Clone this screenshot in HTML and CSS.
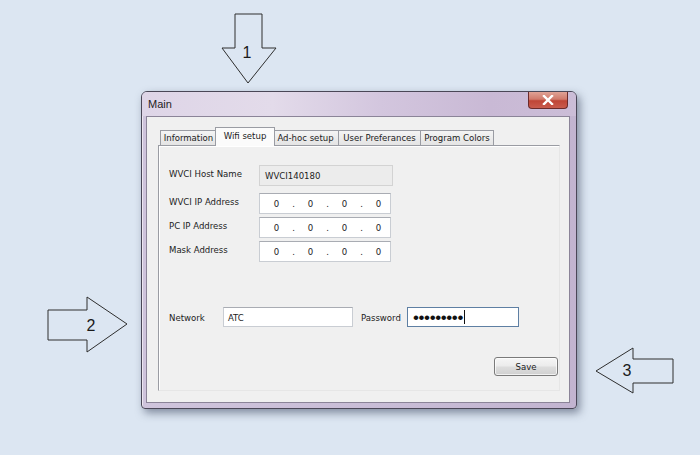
FILE: index.html
```html
<!DOCTYPE html>
<html lang="en">
<head>
    <meta charset="UTF-8">
    <title>Main - Wifi setup</title>
    <link rel="stylesheet" href="styles.css">
</head>
<body>
    <svg class="callouts" viewBox="0 0 700 455" width="700" height="455">
        <polygon points="235,14 262,14 262,48 276,48 248,83 222,48 235,48"/>
        <polygon points="48,310 87,310 87,297 127,324 87,352 87,340 48,340"/>
        <polygon points="596,371 633,348 633,359 673,359 673,383 633,383 633,393"/>
        <text x="247" y="58">1</text>
        <text x="91" y="331">2</text>
        <text x="627" y="376">3</text>
    </svg>

    <div class="window">
        <div class="titlebar">
            <span class="title">Main</span>
            <button class="close" title="Close">
                <svg width="12" height="10" viewBox="0 0 12 10">
                    <path d="M2 1 L10 9 M10 1 L2 9" stroke="#fff" stroke-width="2.4" stroke-linecap="square"/>
                </svg>
            </button>
        </div>

        <div class="client">
            <div class="tabs">
                <div class="tab w-info">Information</div>
                <div class="tab active w-wifi">Wifi setup</div>
                <div class="tab w-adhoc">Ad-hoc setup</div>
                <div class="tab w-user">User Preferances</div>
                <div class="tab w-colors">Program Colors</div>
            </div>

            <div class="panel">
                <div class="fields">
                    <div class="row host">
                        <label>WVCI Host Name</label>
                        <div class="box readonly">WVCI140180</div>
                    </div>
                    <div class="row">
                        <label>WVCI IP Address</label>
                        <div class="box ip"><span>0</span><span>.</span><span>0</span><span>.</span><span>0</span><span>.</span><span>0</span></div>
                    </div>
                    <div class="row">
                        <label>PC IP Address</label>
                        <div class="box ip"><span>0</span><span>.</span><span>0</span><span>.</span><span>0</span><span>.</span><span>0</span></div>
                    </div>
                    <div class="row">
                        <label>Mask Address</label>
                        <div class="box ip"><span>0</span><span>.</span><span>0</span><span>.</span><span>0</span><span>.</span><span>0</span></div>
                    </div>
                </div>

                <div class="net-row">
                    <label class="net-label">Network</label>
                    <div class="box network">ATC</div>
                    <label class="pass-label">Password</label>
                    <div class="box password focused"><span class="dots">•••••••••</span><span class="caret"></span></div>
                </div>

                <div class="actions">
                    <button class="save">Save</button>
                </div>
            </div>
        </div>
    </div>
</body>
</html>
```

FILE: styles.css
```css
body {
    margin: 0;
    width: 700px;
    height: 455px;
    overflow: hidden;
    background: #dce6f2;
    font-family: "DejaVu Sans Condensed", "Liberation Sans", Arial, sans-serif;
    font-size: 9.5px;
    color: #1c1c1c;
    position: relative;
}
.callouts {
    position: absolute;
    left: 0;
    top: 0;
    pointer-events: none;
}
.callouts polygon {
    fill: #dce6f2;
    stroke: #2e2e2e;
    stroke-width: 1;
}
.callouts text {
    font-family: "Liberation Sans", Arial, sans-serif;
    font-size: 16px;
    fill: #1a1a1a;
    text-anchor: middle;
}

/* window frame */
.window {
    box-sizing: border-box;
    margin: 91px 0 0 141px;
    width: 436px;
    height: 318px;
    border: 1px solid #4a4757;
    border-radius: 6px 6px 4px 4px;
    padding: 0 6px 5px 4px;
    background: linear-gradient(90deg, #cfc4dc, #c8bcd6 60%, #c2b4d0);
    box-shadow: 3px 4px 9px rgba(40, 50, 75, 0.5), inset 1px 1px 0 rgba(255, 255, 255, 0.6);
    display: flex;
    flex-direction: column;
}
.titlebar {
    height: 24px;
    margin: 0 -6px 0 -4px;
    padding: 0 8px 0 6px;
    display: flex;
    justify-content: space-between;
    align-items: flex-start;
    background: linear-gradient(90deg, #ded5e7 0%, #e3dbea 30%, #d3c6de 55%, #c9b9d5 80%, #cbbdd7 100%);
    border-radius: 5px 5px 0 0;
}
.title {
    font-family: "Liberation Sans", Arial, sans-serif;
    font-size: 11px;
    padding-top: 6px;
    color: #1e1e1e;
}
.close {
    width: 40px;
    height: 17px;
    padding: 0;
    border: 1px solid #6b2a2a;
    border-top: none;
    border-radius: 0 0 4px 4px;
    background: linear-gradient(180deg, #e0a396 0%, #d07a6b 45%, #bf4536 55%, #c95b4d 100%);
    display: flex;
    align-items: center;
    justify-content: center;
}

/* client area */
.client {
    flex: 1;
    background: #f0f0f0;
    border: 1px solid #8b8498;
    padding: 10px 9px 11px 11px;
    display: flex;
    flex-direction: column;
}
.tabs {
    display: flex;
    align-items: flex-end;
    height: 18px;
    padding-left: 2px;
    position: relative;
    z-index: 1;
}
.tab {
    box-sizing: border-box;
    height: 15px;
    border: 1px solid #9a9ca3;
    border-bottom: none;
    border-left: none;
    background: linear-gradient(180deg, #f4f4f4, #e4e4e4);
    text-align: center;
    line-height: 14px;
    white-space: nowrap;
}
.tab.w-info { width: 57px; border-left: 1px solid #9a9ca3; }
.tab.w-wifi { width: 60px; }
.tab.w-adhoc { width: 66px; }
.tab.w-user { width: 82px; }
.tab.w-colors { width: 73px; }
.tab.active {
    height: 19px;
    margin: 0 -2px -1px -2px;
    border-left: 1px solid #9a9ca3;
    background: #fbfbfb;
    line-height: 15px;
    position: relative;
    z-index: 2;
}
.panel {
    flex: 1;
    border: 1px solid #9a9ca3;
    border-right-color: #e6e6e6;
    border-bottom-color: #e6e6e6;
    background: #f0f0f0;
    box-shadow: inset 1px 1px 0 #ffffff;
    padding: 19px 1px 0 10px;
}

/* rows */
.row {
    display: flex;
    align-items: flex-start;
    height: 21px;
    margin-bottom: 3px;
}
.row.host {
    margin-bottom: 7px;
}
.row label {
    width: 90px;
    padding-top: 3px;
    line-height: 12px;
}
.box {
    box-sizing: border-box;
    height: 21px;
    border: 1px solid #c9cdd3;
    border-top-color: #a9acb3;
    background: #ffffff;
    display: flex;
    align-items: center;
}
.box.readonly {
    width: 134px;
    padding-left: 5px;
    background: #ececec;
    border-color: #d3d3d3;
}
.box.ip {
    width: 132px;
    padding-left: 8px;
}
.box.ip span {
    width: 17px;
    text-align: center;
}

.net-row {
    display: flex;
    align-items: center;
    margin-top: 45px;
}
.net-label {
    width: 54px;
}
.box.network {
    width: 130px;
    height: 20px;
    padding-left: 4px;
}
.pass-label {
    margin-left: 8px;
    width: 46px;
}
.box.password {
    width: 112px;
    height: 20px;
    padding-left: 5px;
}
.box.focused {
    border-color: #5e7fa3;
}
.dots {
    font-family: "Liberation Sans", Arial, sans-serif;
    font-size: 17px;
    line-height: 1;
    letter-spacing: -0.4px;
    color: #111;
}
.caret {
    width: 1px;
    height: 14px;
    background: #111;
    margin-left: 1px;
}

.actions {
    display: flex;
    justify-content: flex-end;
    margin-top: 30px;
}
.save {
    width: 64px;
    height: 19px;
    padding: 0;
    font-family: "DejaVu Sans Condensed", "Liberation Sans", Arial, sans-serif;
    font-size: 9.5px;
    color: #1c1c1c;
    border: 1px solid #7a7a7a;
    border-radius: 3px;
    background: linear-gradient(180deg, #f6f6f6 0%, #ebebeb 48%, #dddddd 52%, #d0d0d0 100%);
    box-shadow: inset 0 0 0 1px rgba(255, 255, 255, 0.7);
}
```
